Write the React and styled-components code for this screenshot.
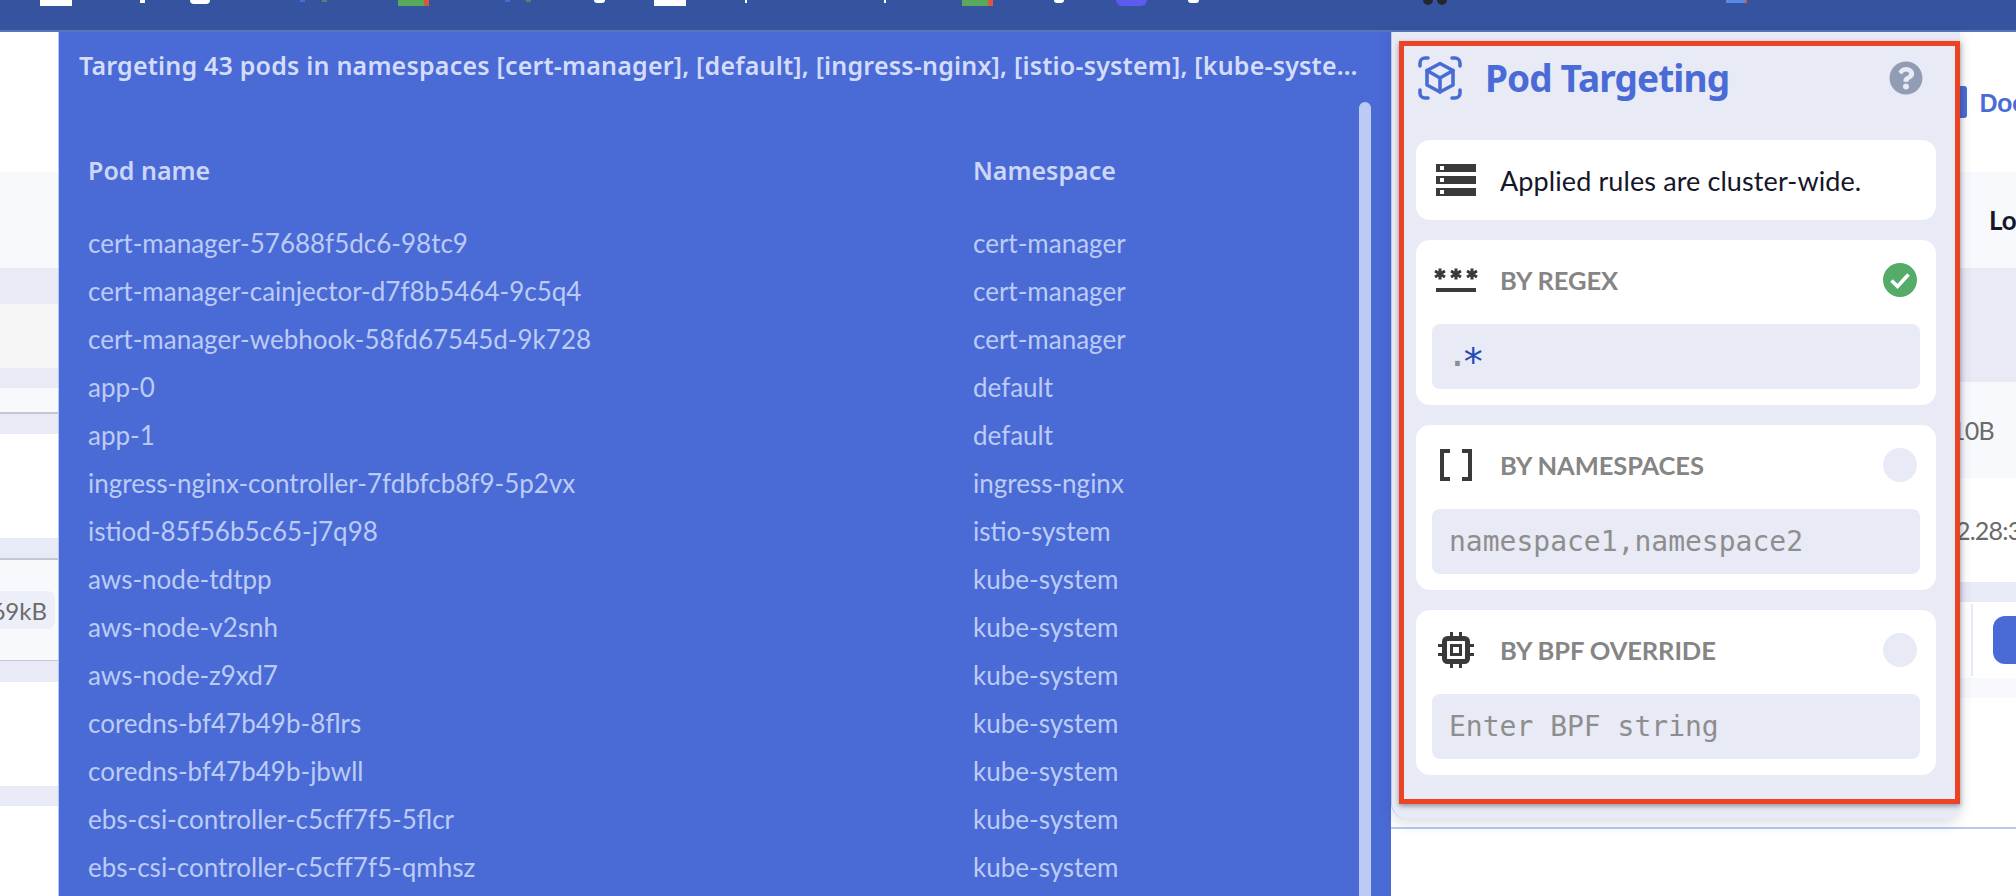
import styled, { createGlobalStyle } from "styled-components";
import { FaQuestionCircle } from "react-icons/fa";

const GlobalStyle = createGlobalStyle`
  html, body {
    margin: 0;
    padding: 0;
    height: 100%;
    background: #fff;
    overflow: hidden;
  }
  * {
    box-sizing: border-box;
  }
`;

const SANS = `Lato, "Noto Sans", sans-serif`;
const HEADING = `"Noto Sans", Lato, sans-serif`;
const MONO = `"DejaVu Sans Mono", "Liberation Mono", monospace`;

const pods = [
  ["cert-manager-57688f5dc6-98tc9", "cert-manager"],
  ["cert-manager-cainjector-d7f8b5464-9c5q4", "cert-manager"],
  ["cert-manager-webhook-58fd67545d-9k728", "cert-manager"],
  ["app-0", "default"],
  ["app-1", "default"],
  ["ingress-nginx-controller-7fdbfcb8f9-5p2vx", "ingress-nginx"],
  ["istiod-85f56b5c65-j7q98", "istio-system"],
  ["aws-node-tdtpp", "kube-system"],
  ["aws-node-v2snh", "kube-system"],
  ["aws-node-z9xd7", "kube-system"],
  ["coredns-bf47b49b-8flrs", "kube-system"],
  ["coredns-bf47b49b-jbwll", "kube-system"],
  ["ebs-csi-controller-c5cff7f5-5flcr", "kube-system"],
  ["ebs-csi-controller-c5cff7f5-qmhsz", "kube-system"],
];

// bottoms of the bookmark icons that stick out of the cropped browser bar
const bookmarks = [
  { gap: 40, w: 32, h: 6, color: "#fff" },
  { gap: 68, w: 5, h: 3, color: "#fff" },
  { gap: 45, w: 20, h: 4, color: "#fff", round: true },
  { gap: 90, w: 5, h: 2, color: "#3f6fd8" },
  { gap: 17, w: 5, h: 2, color: "#4a8a6a" },
  { gap: 71, w: 26, h: 6, color: "#58a95c" },
  { gap: 0, w: 5, h: 6, color: "#d9573f" },
  { gap: 76, w: 5, h: 2, color: "#3f6fd8" },
  { gap: 16, w: 5, h: 2, color: "#4a8a6a" },
  { gap: 63, w: 11, h: 3, color: "#fff", round: true },
  { gap: 49, w: 32, h: 6, color: "#fff" },
  { gap: 59, w: 2, h: 3, color: "#fff" },
  { gap: 137, w: 2, h: 3, color: "#fff" },
  { gap: 76, w: 26, h: 6, color: "#58a95c" },
  { gap: 0, w: 5, h: 6, color: "#d9573f" },
  { gap: 61, w: 10, h: 3, color: "#fff", round: true },
  { gap: 52, w: 31, h: 6, color: "#5b5bf0", round: true },
  { gap: 41, w: 11, h: 3, color: "#fff", round: true },
  { gap: 224, w: 10, h: 5, color: "#26262e", round: true },
  { gap: 4, w: 10, h: 5, color: "#26262e", round: true },
  { gap: 279, w: 19, h: 3, color: "#5a8ae8" },
  { gap: 0, w: 2, h: 3, color: "#d9573f" },
];

const leftStripes = [
  { h: 140, bg: "#fff" },
  { h: 96, bg: "#f8f9fd" },
  { h: 36, bg: "#e8eaf6" },
  { h: 64, bg: "#f5f5f5" },
  { h: 20, bg: "#e8eaf6" },
  { h: 24, bg: "#f8f9fd" },
  { h: 2, bg: "#c3c6d4" },
  { h: 20, bg: "#e8eaf6" },
  { h: 104, bg: "#fff" },
  { h: 20, bg: "#e8eaf6" },
  { h: 2, bg: "#c3c6d4" },
];

const leftStripesBottom = [
  { h: 1, bg: "#c3c6d4" },
  { h: 21, bg: "#e8eaf6" },
  { h: 104, bg: "#fff" },
  { h: 20, bg: "#e8eaf6" },
];

const Page = styled.div`
  width: 2016px;
  height: 896px;
  overflow: hidden;
  display: flex;
  flex-direction: column;
  font-family: ${SANS};
  background: #fff;
`;

const BrowserBar = styled.div`
  height: 32px;
  flex: none;
  display: flex;
  align-items: flex-start;
  background: #36539f;
  border-bottom: 2px solid #5a74b8;
`;

const Bookmark = styled.span`
  flex: none;
  margin-left: ${(p) => p.$gap}px;
  width: ${(p) => p.$w}px;
  height: ${(p) => p.$h}px;
  background: ${(p) => p.$color};
  border-radius: ${(p) => (p.$round ? "0 0 8px 8px" : "0")};
`;

const Main = styled.div`
  flex: 1;
  min-height: 0;
  display: flex;
`;

const LeftStrip = styled.div`
  width: 58px;
  flex: none;
  display: flex;
  flex-direction: column;
`;

const Stripe = styled.div`
  height: ${(p) => p.$h}px;
  flex: none;
  background: ${(p) => p.$bg};
`;

const SizeRow = styled.div`
  height: 100px;
  flex: none;
  background: #f8f9fd;
  display: flex;
  align-items: center;
  justify-content: flex-end;
  padding-right: 3px;
`;

const SizeBadge = styled.span`
  height: 38px;
  padding: 0 8px 0 6px;
  display: flex;
  align-items: center;
  background: #eceef8;
  border-radius: 8px;
  font-size: 24px;
  color: #6b6b6b;
  white-space: nowrap;
`;

const PodList = styled.div`
  width: 1333px;
  flex: none;
  display: flex;
  flex-direction: column;
  background: #4a6bd6;
  border-left: 1px solid #b8c8f2;
  overflow: hidden;
`;

const ListTitle = styled.div`
  height: 70px;
  flex: none;
  padding: 16px 0 0 20px;
  width: 1307px;
  font-family: ${HEADING};
  font-size: 25px;
  line-height: 34px;
  font-weight: 600;
  letter-spacing: 0.2px;
  color: #d4dcfa;
  white-space: nowrap;
  overflow: hidden;
  text-overflow: ellipsis;
`;

const ListBody = styled.div`
  flex: 1;
  min-height: 0;
  display: flex;
`;

const PodTable = styled.div`
  flex: 1;
  padding: 44px 0 0 29px;
`;

const PodRow = styled.div`
  height: 48px;
  display: grid;
  grid-template-columns: 885px 1fr;
  align-items: center;
  font-size: 26px;
  letter-spacing: 0;
  color: #bccbf5;
  white-space: nowrap;
`;

const HeadRow = styled(PodRow)`
  margin-bottom: 25px;
  font-family: ${HEADING};
  font-size: 25px;
  font-weight: 600;
  color: #ccd6f8;
`;

const ScrollThumb = styled.div`
  width: 12px;
  flex: none;
  margin-right: 20px;
  background: #bccaf5;
  border-radius: 6px 6px 0 0;
`;

const RightSide = styled.div`
  flex: 1;
  min-width: 0;
  display: flex;
  flex-direction: column;
`;

const RightTop = styled.div`
  height: 797px;
  flex: none;
  display: flex;
  border-bottom: 2px solid #b8c8f2;
`;

const TargetingPanel = styled.div`
  width: 569px;
  height: 787px;
  flex: none;
  position: relative;
  z-index: 1;
  padding: 9px 0 0 7px;
  background: #e8eaf6;
  border-left: 1px solid #b8c8f2;
  border-radius: 0 0 16px 16px;
  box-shadow: 0 4px 14px rgba(40, 50, 90, 0.18);
`;

const RedFrame = styled.div`
  height: 763px;
  display: flex;
  flex-direction: column;
  gap: 20px;
  padding: 10px 19px 0 12px;
  border: 5px solid #ec4325;
  box-shadow: 0 2px 5px rgba(30, 30, 50, 0.45);
`;

const PanelHeader = styled.div`
  display: flex;
  align-items: center;
  height: 44px;
  margin: 0 0 20px 2px;
  padding-right: 13px;
  color: #4a6bd6;
`;

const PanelTitle = styled.h1`
  flex: 1;
  margin: 0 0 2px 23px;
  font-family: ${HEADING};
  font-size: 37px;
  font-weight: 700;
  letter-spacing: -0.9px;
  color: #4a6bd6;
`;

const HelpIcon = styled(FaQuestionCircle)`
  width: 34px;
  height: 34px;
  color: #919db5;
`;

const InfoCard = styled.div`
  height: 80px;
  display: flex;
  align-items: center;
  gap: 22px;
  padding-left: 18px;
  background: #fff;
  border-radius: 14px;
  font-size: 27px;
  letter-spacing: 0.1px;
  color: #16162a;
`;

const RuleCard = styled.div`
  height: 165px;
  padding: 23px 16px 16px;
  background: #fff;
  border-radius: 14px;
`;

const RuleHead = styled.div`
  height: 34px;
  display: flex;
  align-items: center;
  gap: 22px;
  margin-bottom: 27px;
  padding: 0 3px 0 2px;
`;

const IconSlot = styled.div`
  width: 44px;
  flex: none;
  display: flex;
  justify-content: center;
  align-items: center;
  color: #3a3a3a;
`;

const RuleLabel = styled.span`
  flex: 1;
  font-size: 25.5px;
  font-weight: 700;
  letter-spacing: -0.1px;
  color: #858585;
`;

const StatusDot = styled.span`
  width: 34px;
  height: 34px;
  flex: none;
  border-radius: 50%;
  background: #e8eaf6;
`;

const RuleInput = styled.div`
  height: 65px;
  display: flex;
  align-items: center;
  padding-left: 17px;
  background: #e8eaf6;
  border-radius: 8px;
  font-family: ${MONO};
  font-size: 28px;
  color: #8e8e8e;
  white-space: pre;
`;

const RegexDot = styled.span`
  font-weight: 700;
`;

const RegexStar = styled.span`
  font-size: 38px;
  line-height: 1;
  margin: 10px 0 0 -4px;
  color: #2549b0;
`;

const RightStrip = styled.div`
  flex: 1;
  min-width: 0;
  display: flex;
  flex-direction: column;
  overflow: hidden;
`;

const StripCell = styled.div`
  height: ${(p) => p.$h}px;
  flex: none;
  display: flex;
  align-items: center;
  background: ${(p) => p.$bg};
  font-size: 26px;
  white-space: nowrap;
  color: #6b6b6b;
`;

const DocLink = styled.span`
  margin: 0 0 0 12px;
  font-family: ${HEADING};
  font-weight: 600;
  letter-spacing: -1.2px;
  color: #4a6bd6;
`;

const DocIcon = styled.span`
  width: 7px;
  height: 32px;
  flex: none;
  background: #4a6bd6;
  border-radius: 0 3px 3px 0;
`;

const LogsTab = styled.span`
  margin-left: 29px;
  font-weight: 700;
  color: #16162a;
`;

const SizeValue = styled.span`
  margin-left: ${(p) => p.$shift}px;
  font-size: 25px;
  letter-spacing: -0.8px;
`;

const ActionDivider = styled.span`
  width: 2px;
  height: 72px;
  flex: none;
  margin-left: 11px;
  background: #e8eaf6;
`;

const ActionButton = styled.span`
  width: 40px;
  height: 48px;
  flex: none;
  margin-left: 20px;
  background: #4a6bd6;
  border-radius: 12px 0 0 12px;
`;

function CubeIcon() {
  return (
    <svg width="44" height="44" viewBox="0 0 44 44" fill="none" stroke="currentColor" strokeWidth="3.6" strokeLinecap="round" strokeLinejoin="round">
      <path d="M2 10V7a5 5 0 0 1 5-5h3M34 2h3a5 5 0 0 1 5 5v3M42 34v3a5 5 0 0 1-5 5h-3M10 42H7a5 5 0 0 1-5-5v-3" />
      <path d="M22 7.5 35 14.5V29L22 36 9 29V14.5Z" />
      <path d="M9 14.5 22 22 35 14.5M22 22V36" />
    </svg>
  );
}

function ServerIcon() {
  return (
    <svg width="40" height="32" viewBox="0 0 40 32">
      <path fill="currentColor" fillRule="evenodd" d="M0 0h40v8H0ZM4 2v4h4V2ZM0 12h40v8H0ZM4 14v4h4v-4ZM0 24h40v8H0ZM4 26v4h4v-4Z" />
    </svg>
  );
}

function PasswordIcon() {
  return (
    <svg width="44" height="24" viewBox="0 0 44 24" fill="none" stroke="currentColor">
      {[6, 22, 38].map((x) => (
        <g key={x} strokeWidth="3">
          <path d={`M${x} 0.5V11.5M${x - 5} 3 ${x + 5} 9M${x + 5} 3 ${x - 5} 9`} />
        </g>
      ))}
      <path d="M2 22H42" strokeWidth="4" />
    </svg>
  );
}

function BracketsIcon() {
  return (
    <svg width="32" height="32" viewBox="0 0 32 32" fill="none" stroke="currentColor" strokeWidth="4">
      <path d="M10 2H2V30H10M22 2H30V30H22" />
    </svg>
  );
}

function ChipIcon() {
  return (
    <svg width="36" height="36" viewBox="0 0 36 36" fill="none">
      <rect x="6.5" y="6.5" width="23" height="23" rx="3" stroke="currentColor" strokeWidth="5" />
      <path fill="currentColor" fillRule="evenodd" d="M12 12h12v12H12ZM15 15v6h6v-6Z" />
      <path stroke="currentColor" strokeWidth="3" d="M13.5 0V5M22.5 0V5M13.5 31V36M22.5 31V36M0 13.5H5M0 22.5H5M31 13.5H36M31 22.5H36" />
    </svg>
  );
}

function CheckDot() {
  return (
    <svg width="34" height="34" viewBox="0 0 34 34">
      <circle cx="17" cy="17" r="17" fill="#55ab68" />
      <path d="M8.5 17.5 14.5 23.5 25.5 11.5" fill="none" stroke="#fff" strokeWidth="3.6" />
    </svg>
  );
}

function RuleBlock({ icon, label, active, children }) {
  return (
    <RuleCard>
      <RuleHead>
        <IconSlot>{icon}</IconSlot>
        <RuleLabel>{label}</RuleLabel>
        {active ? <CheckDot /> : <StatusDot />}
      </RuleHead>
      <RuleInput>{children}</RuleInput>
    </RuleCard>
  );
}

export default function App() {
  return (
    <Page>
      <GlobalStyle />
      <BrowserBar>
        {bookmarks.map((b, i) => (
          <Bookmark key={i} $gap={b.gap} $w={b.w} $h={b.h} $color={b.color} $round={b.round} />
        ))}
      </BrowserBar>
      <Main>
        <LeftStrip>
          {leftStripes.map((s, i) => (
            <Stripe key={i} $h={s.h} $bg={s.bg} />
          ))}
          <SizeRow>
            <SizeBadge>69kB</SizeBadge>
          </SizeRow>
          {leftStripesBottom.map((s, i) => (
            <Stripe key={i} $h={s.h} $bg={s.bg} />
          ))}
        </LeftStrip>

        <PodList>
          <ListTitle>
            Targeting 43 pods in namespaces [cert-manager], [default], [ingress-nginx], [istio-system], [kube-system], [monitoring]
          </ListTitle>
          <ListBody>
            <PodTable>
              <HeadRow>
                <span>Pod name</span>
                <span>Namespace</span>
              </HeadRow>
              {pods.map(([name, ns]) => (
                <PodRow key={name}>
                  <span>{name}</span>
                  <span>{ns}</span>
                </PodRow>
              ))}
            </PodTable>
            <ScrollThumb />
          </ListBody>
        </PodList>

        <RightSide>
          <RightTop>
            <TargetingPanel>
              <RedFrame>
                <PanelHeader>
                  <CubeIcon />
                  <PanelTitle>Pod Targeting</PanelTitle>
                  <HelpIcon />
                </PanelHeader>
                <InfoCard>
                  <IconSlot>
                    <ServerIcon />
                  </IconSlot>
                  Applied rules are cluster-wide.
                </InfoCard>
                <RuleBlock icon={<PasswordIcon />} label="BY REGEX" active>
                  <RegexDot>.</RegexDot>
                  <RegexStar>*</RegexStar>
                </RuleBlock>
                <RuleBlock icon={<BracketsIcon />} label="BY NAMESPACES">
                  namespace1,namespace2
                </RuleBlock>
                <RuleBlock icon={<ChipIcon />} label="BY BPF OVERRIDE">
                  Enter BPF string
                </RuleBlock>
              </RedFrame>
            </TargetingPanel>
            <RightStrip>
              <StripCell $h={140} $bg="#fff">
                <DocIcon />
                <DocLink>Docs</DocLink>
              </StripCell>
              <StripCell $h={96} $bg="#f8f9fd">
                <LogsTab>Logs</LogsTab>
              </StripCell>
              <StripCell $h={114} $bg="#e8eaf6" />
              <StripCell $h={96} $bg="#f8f9fd">
                <SizeValue $shift={-9}>10B</SizeValue>
              </StripCell>
              <StripCell $h={104} $bg="#fff">
                <SizeValue $shift={-4}>2.28:38</SizeValue>
              </StripCell>
              <StripCell $h={20} $bg="#e8eaf6" />
              <StripCell $h={76} $bg="#fff">
                <ActionDivider />
                <ActionButton />
              </StripCell>
              <StripCell $h={20} $bg="#f8f9fd" />
            </RightStrip>
          </RightTop>
        </RightSide>
      </Main>
    </Page>
  );
}
